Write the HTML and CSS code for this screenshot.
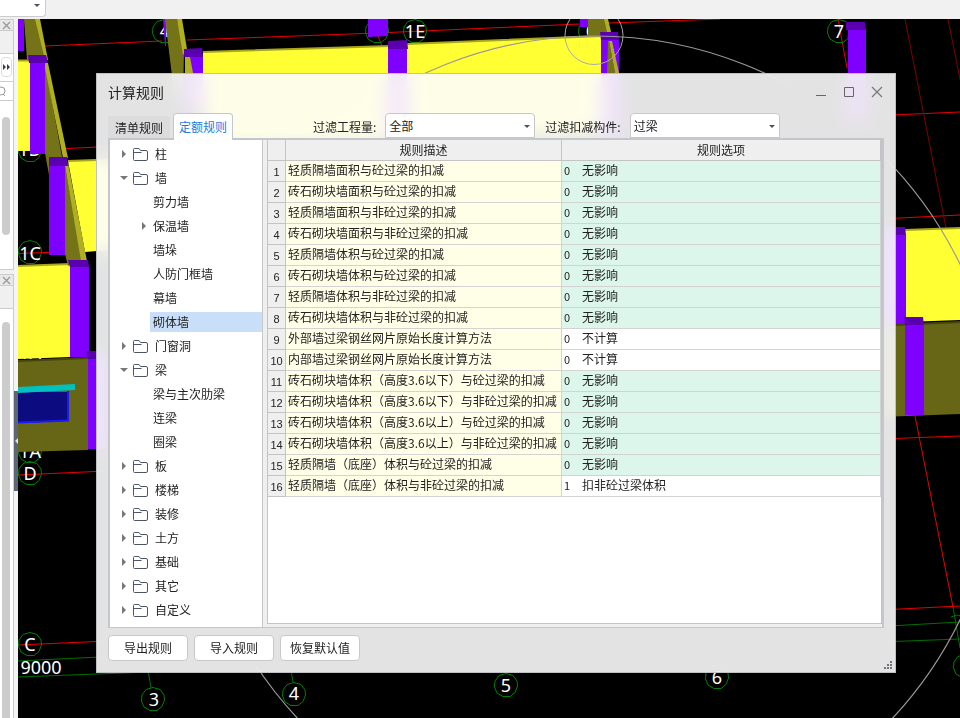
FILE: index.html
```html
<!DOCTYPE html>
<html lang="zh-CN">
<head>
<meta charset="utf-8">
<title>计算规则</title>
<link rel="stylesheet" href="styles.css">
</head>
<body>
<svg class="defs" aria-hidden="true">
  <symbol id="folder" viewBox="0 0 15 13"><path d="M1.500 12.500q-1 0-1-1V1.500q0-1 1-1h4.500l1.500 2h5.500q1.500 0 1.500 1.500v7q0 1.500-1.500 1.500zM.5 4.500h8" fill="none" stroke="#4d5566"/></symbol>
  <symbol id="closed" viewBox="0 0 6 8"><path d="M1 0v8l4-4z" fill="#777"/></symbol>
  <symbol id="open" viewBox="0 0 8 6"><path d="M0 1h8l-4 4z" fill="#777"/></symbol>
  <symbol id="oct" viewBox="-13 -13 26 26"><path d="M0-11.500 7-9.500 11-4 11.500 1 9 7.500 4 11.500-3 11.500-9 8-11.500 2-11-4-7-9.500z" fill="none" stroke="#008000"/></symbol>
  <symbol id="cross" viewBox="0 0 9 9"><path d="M1 1l7 7M8 1l-7 7" fill="none" stroke="#999" stroke-width="1.300"/></symbol>
</svg>
<header class="topbar"><div class="topbar-combo"></div></header>
<main class="workspace">
  <aside class="docks">
    <section class="dock dock-upper">
      <div class="dock-head"><svg width="9" height="9"><use href="#cross"/></svg></div>
      <div class="dock-strip"></div>
      <div class="dock-more"><svg width="8" height="6" viewBox="0 0 8 6"><path d="M0 0v6l3-3zM4 0v6l3-3z" fill="#333b4a"/></svg></div>
      <div class="dock-search"><svg width="10" height="12" viewBox="0 0 10 12"><circle cx="1" cy="5" r="4" fill="none" stroke="#999"/><path d="M3 8l2 2" stroke="#999"/></svg></div>
      <div class="dock-scroll"></div>
    </section>
    <section class="dock dock-lower">
      <div class="dock-head"><svg width="9" height="9"><use href="#cross"/></svg></div>
      <div class="dock-strip"></div>
      <div class="dock-scroll"></div>
    </section>
  </aside>
  <div class="splitter"><div class="splitter-grip"><svg width="4" height="6" viewBox="0 0 4 6"><path d="M4 0v6l-3-3z" fill="#e0e0e0"/></svg></div></div>
  <div class="canvas">
    <svg viewBox="18 19 942 699" preserveAspectRatio="xMinYMin slice" role="img" aria-label="三维模型视图">
      <rect x="18" y="19" width="942" height="699" fill="#000"/>
      <path d="M44 46 162 41M187 40 377 33 580 24 720 19M66 148.500 120 146M18 253.500 60 252M18 475 150 469M18 645 130 640M880 115.500 960 112M880 219 960 215M880 439 960 436M880 610 960 606M915 416 953 607M838 19 847 68M378 36 382 46" fill="none" stroke="#e60000"/>
      <path d="M905 19 946 228M948 19 961 84" stroke="#800000" fill="none"/>
      <path d="M18 661 120 656M18 677 150 672M880 626.500 960 622M880 642 960 639M953 607 960 648M148 670 151 688M291 670 293 682M951 617l6-2 4 1" stroke="#007000" fill="none"/>
      <g>
        <use href="#oct" x="151" y="18" width="26" height="26"/><use href="#oct" x="364" y="18" width="26" height="26"/>
        <use href="#oct" x="402" y="18" width="26" height="26"/><use href="#oct" x="577" y="18" width="26" height="26"/>
        <use href="#oct" x="826" y="18" width="26" height="26"/><use href="#oct" x="17" y="137" width="26" height="26"/>
        <use href="#oct" x="17" y="239" width="26" height="26"/><use href="#oct" x="17" y="438" width="26" height="26"/>
        <use href="#oct" x="17" y="460" width="26" height="26"/><use href="#oct" x="17" y="631" width="26" height="26"/>
        <use href="#oct" x="140" y="686" width="26" height="26"/><use href="#oct" x="281" y="681" width="26" height="26"/>
        <use href="#oct" x="493" y="672" width="26" height="26"/><use href="#oct" x="704" y="664" width="26" height="26"/>
        <use href="#oct" x="952" y="653" width="26" height="26"/>
      </g>
      <g class="axis-label">
        <text x="165" y="37">4</text><text x="415" y="38">1E</text><text x="591" y="37">6</text><text x="839" y="38">7</text>
        <text x="30" y="156">1D</text><text x="30" y="260">1C</text><text x="30" y="359">1A</text><text x="30" y="458">1A</text><text x="30" y="480">D</text>
        <text x="30" y="651">C</text><text x="41" y="674">9000</text><text x="154" y="706">3</text><text x="294" y="700">4</text>
        <text x="506" y="692">5</text><text x="717" y="684">6</text>
      </g>
      <path d="M18 19h6v32h-6zM368 19h20v17l-20 1zM580 19h9v8h-9zM163 19h3v27h-1z" fill="#8000ff"/>
      <g fill="#ff3">
        <path d="M18 60h12v91H18zM68 161l80-4v92l-51 2-12 1zM18 266l52-2v93l-52 2zM203 52l187-6v97l-187 6zM407 44l195-8v97l-195 9zM905 230l55-2v92l-55 2z"/>
      </g>
      <path d="M18 60.500h12M68 161l29-1M18 266l52-2M203 52l187-6M407 44l195-8M905 230l55-2" fill="none" stroke="#a8a61c" stroke-width="2"/>
      <path d="M18 361l70-3v92l-70 2zM880 326l80-4v92l-80 3z" fill="#666616"/>
      <path d="M18 361l70-3M896 325l64-3" stroke="#45450d" stroke-width="2"/>
      <path d="M24 19h12l9 37-18 4zM45 63l17 94-13 18-4-22zM65 166l17 94-14 6-3-12zM165 19h12l7 31-1 50h-8zM588 19h17l4 17h-21z" fill="#757317"/>
      <path d="M35 19h5l8 41-3 0zM44 63h4l20 95h-5zM65 166l3-3 19 98h-6zM177 19h5l5 30-4 6zM604 19h4l4 17h-4z" fill="#b0ae22"/>
      <path d="M30 62h15v92H30zM49 165h16v90H49zM70 266h19v91H70zM88 358h20v91H88zM185 56h18v56h-18zM388 47h19v100h-19zM601 39h18v100h-18zM848 29h18v90h-18zM880 234h26v90h-26zM905 324h19v91h-19z" fill="#8000ff"/>
      <path d="M28 55h18l2 8H29zM49 157h18l1 9H49zM68 260h20l1 7H70zM86 351h20v8H88zM184 49l18-1 1 9h-19zM388 41l19-1 1 9h-20zM600 32h18l1 8h-18zM846 22h19l1 8h-20zM880 227h25l1 8h-26zM904 317h19l1 8h-19z" fill="#5a00b0"/>
      <path d="M185 57h5l3 16h-8zM609 41h3l7 32h-4z" fill="#b0ae22"/>
      <path d="M608 41h1l6 32h-8z" fill="#757317"/>
      <path d="M18 392h51v29l-51 2z" fill="#0c0c80"/>
      <path d="M18 422.500l50-2V391" fill="none" stroke="#1a1aff" stroke-width="2"/>
      <path d="M18 387l57-3v6l-57 3z" fill="#00c0c0"/>
      <circle cx="594" cy="35.500" r="29" fill="none" stroke="#aaa"/>
      <circle cx="595" cy="442" r="406" fill="none" stroke="#999" stroke-width="1.200"/>
    </svg>
  </div>
</main>

<section class="dialog" role="dialog" aria-labelledby="dialog-title">
  <header class="titlebar">
    <h1 id="dialog-title">计算规则</h1>
    <div class="window-buttons">
      <button type="button" aria-label="最小化"><svg width="12" height="12"><path d="M1 9.500h10" stroke="#666"/></svg></button>
      <button type="button" aria-label="最大化"><svg width="12" height="12"><path d="M1.500 1.500h9v9h-9z" fill="none" stroke="#666"/></svg></button>
      <button type="button" aria-label="关闭"><svg width="12" height="12"><path d="M1 1l10 10M11 1 1 11" stroke="#777" stroke-width="1.200"/></svg></button>
    </div>
  </header>
  <div class="toolbar">
    <div class="tabs" role="tablist">
      <button type="button" class="tab" role="tab" aria-selected="false">清单规则</button>
      <button type="button" class="tab tab-active" role="tab" aria-selected="true">定额规则</button>
    </div>
    <label for="quantity">过滤工程量:</label>
    <div class="combo"><select id="quantity"><option>全部</option></select></div>
    <label for="member">过滤扣减构件:</label>
    <div class="combo"><select id="member"><option>过梁</option></select></div>
  </div>
  <div class="panel">
    <ul class="tree" role="tree">
      <li role="treeitem"><svg class="arrow"><use href="#closed"/></svg><svg class="folder"><use href="#folder"/></svg><span>柱</span></li>
      <li role="treeitem"><svg class="arrow arrow-open"><use href="#open"/></svg><svg class="folder"><use href="#folder"/></svg><span>墙</span></li>
      <li class="child" role="treeitem"><span>剪力墙</span></li>
      <li class="child" role="treeitem"><svg class="arrow"><use href="#closed"/></svg><span>保温墙</span></li>
      <li class="child" role="treeitem"><span>墙垛</span></li>
      <li class="child" role="treeitem"><span>人防门框墙</span></li>
      <li class="child" role="treeitem"><span>幕墙</span></li>
      <li class="child selected" role="treeitem" aria-selected="true"><span>砌体墙</span></li>
      <li role="treeitem"><svg class="arrow"><use href="#closed"/></svg><svg class="folder"><use href="#folder"/></svg><span>门窗洞</span></li>
      <li role="treeitem"><svg class="arrow arrow-open"><use href="#open"/></svg><svg class="folder"><use href="#folder"/></svg><span>梁</span></li>
      <li class="child" role="treeitem"><span>梁与主次肋梁</span></li>
      <li class="child" role="treeitem"><span>连梁</span></li>
      <li class="child" role="treeitem"><span>圈梁</span></li>
      <li role="treeitem"><svg class="arrow"><use href="#closed"/></svg><svg class="folder"><use href="#folder"/></svg><span>板</span></li>
      <li role="treeitem"><svg class="arrow"><use href="#closed"/></svg><svg class="folder"><use href="#folder"/></svg><span>楼梯</span></li>
      <li role="treeitem"><svg class="arrow"><use href="#closed"/></svg><svg class="folder"><use href="#folder"/></svg><span>装修</span></li>
      <li role="treeitem"><svg class="arrow"><use href="#closed"/></svg><svg class="folder"><use href="#folder"/></svg><span>土方</span></li>
      <li role="treeitem"><svg class="arrow"><use href="#closed"/></svg><svg class="folder"><use href="#folder"/></svg><span>基础</span></li>
      <li role="treeitem"><svg class="arrow"><use href="#closed"/></svg><svg class="folder"><use href="#folder"/></svg><span>其它</span></li>
      <li role="treeitem"><svg class="arrow"><use href="#closed"/></svg><svg class="folder"><use href="#folder"/></svg><span>自定义</span></li>
    </ul>
    <div class="grid">
      <table>
        <colgroup><col class="col-no"><col class="col-rule"><col></colgroup>
        <thead><tr><th></th><th>规则描述</th><th>规则选项</th></tr></thead>
        <tbody>
          <tr><th>1</th><td>轻质隔墙面积与砼过梁的扣减</td><td><span class="code">0</span>无影响</td></tr>
          <tr><th>2</th><td>砖石砌块墙面积与砼过梁的扣减</td><td><span class="code">0</span>无影响</td></tr>
          <tr><th>3</th><td>轻质隔墙面积与非砼过梁的扣减</td><td><span class="code">0</span>无影响</td></tr>
          <tr><th>4</th><td>砖石砌块墙面积与非砼过梁的扣减</td><td><span class="code">0</span>无影响</td></tr>
          <tr><th>5</th><td>轻质隔墙体积与砼过梁的扣减</td><td><span class="code">0</span>无影响</td></tr>
          <tr><th>6</th><td>砖石砌块墙体积与砼过梁的扣减</td><td><span class="code">0</span>无影响</td></tr>
          <tr><th>7</th><td>轻质隔墙体积与非砼过梁的扣减</td><td><span class="code">0</span>无影响</td></tr>
          <tr><th>8</th><td>砖石砌块墙体积与非砼过梁的扣减</td><td><span class="code">0</span>无影响</td></tr>
          <tr class="plain"><th>9</th><td>外部墙过梁钢丝网片原始长度计算方法</td><td><span class="code">0</span>不计算</td></tr>
          <tr class="plain"><th>10</th><td>内部墙过梁钢丝网片原始长度计算方法</td><td><span class="code">0</span>不计算</td></tr>
          <tr><th>11</th><td>砖石砌块墙体积（高度3.6以下）与砼过梁的扣减</td><td><span class="code">0</span>无影响</td></tr>
          <tr><th>12</th><td>砖石砌块墙体积（高度3.6以下）与非砼过梁的扣减</td><td><span class="code">0</span>无影响</td></tr>
          <tr><th>13</th><td>砖石砌块墙体积（高度3.6以上）与砼过梁的扣减</td><td><span class="code">0</span>无影响</td></tr>
          <tr><th>14</th><td>砖石砌块墙体积（高度3.6以上）与非砼过梁的扣减</td><td><span class="code">0</span>无影响</td></tr>
          <tr><th>15</th><td>轻质隔墙（底座）体积与砼过梁的扣减</td><td><span class="code">0</span>无影响</td></tr>
          <tr class="plain"><th>16</th><td>轻质隔墙（底座）体积与非砼过梁的扣减</td><td><span class="code">1</span>扣非砼过梁体积</td></tr>
        </tbody>
      </table>
    </div>
  </div>
  <footer class="actions">
    <button type="button">导出规则</button>
    <button type="button">导入规则</button>
    <button type="button">恢复默认值</button>
    <svg class="size-grip" width="8" height="8"><path d="M6 0h2v2H6zM3 3h2v2H3zM6 3h2v2H6zM0 6h2v2H0zM3 6h2v2H3zM6 6h2v2H6z" fill="#70757d"/></svg>
  </footer>
</section>
</body>
</html>
```
FILE: styles.css
```css
*, ::after { box-sizing: border-box; }
body {
  margin: 0;
  height: 100vh;
  overflow: hidden;
  display: flex;
  flex-direction: column;
  background: #f1f1f1;
  color: #222;
  font: 12px/20px "Noto Sans CJK SC", sans-serif;
}
svg { display: block; flex: none; }
button, select { font: inherit; color: inherit; }
.defs { position: absolute; width: 0; height: 0; }

.topbar { height: 19px; flex: none; }
.topbar-combo {
  width: 46px;
  height: 17px;
  border: solid #ccc;
  border-width: 0 1px 1px 0;
  border-radius: 0 0 4px 0;
  background: #fff;
  padding: 4px 0 0 34px;
}
.topbar-combo::after, .combo::after {
  content: "";
  display: block;
  width: 6px;
  border: solid transparent;
  border-width: 3px 3px 0;
  border-top-color: #4a5160;
}

.workspace { flex: 1; min-height: 0; display: flex; }
.docks { width: 14px; display: flex; flex-direction: column; background: #f1f1f1; }
.dock { display: flex; flex-direction: column; border: solid #ccc; border-width: 1px 1px 1px 0; background: #fff; }
.dock-upper { height: 251px; }
.dock-lower { flex: 1; margin-top: 4px; border-bottom: 0; }
.dock-head { height: 11px; background: #e8e8e8; padding: 1px 2px; border-bottom: 1px solid #ccc; }
.dock-strip { height: 23px; background: #f0f0f0; border-bottom: 1px solid #ccc; }
.dock-more {
  height: 20px;
  margin: 3px 1px 4px;
  border: 1px solid #ddd;
  border-radius: 4px;
  padding: 6px 0 0 1px;
}
.dock-search { height: 20px; border: solid #ccc; border-width: 1px 0; padding-top: 4px; }
.dock-scroll { flex: 1; width: 8px; margin: 16px 0 34px 2px; border-radius: 4px; background: #ccc; }
.dock-lower .dock-scroll { margin: 13px 0 0 2px; border-radius: 4px 4px 0 0; }
.splitter { width: 4px; background: #f4f4f4; display: flex; align-items: center; }
.splitter-grip { width: 4px; height: 100px; margin-top: 145px; background: #5d6675; display: flex; align-items: center; }
.canvas { flex: 1; min-width: 0; background: #000; overflow: hidden; }
.canvas svg { width: 100%; height: 100%; }
.axis-label { fill: #fff; font: 18px "Noto Sans", sans-serif; text-anchor: middle; }

.dialog {
  position: absolute;
  inset: 73px 64px 45px 96px;
  display: flex;
  flex-direction: column;
  border: 1px solid #bfc2c5;
  background: rgba(254, 254, 254, .895);
  backdrop-filter: blur(10px);
  padding: 0 11px;
}
.titlebar { height: 39px; flex: none; display: flex; justify-content: space-between; }
h1 { margin: 0; font-size: 14px; line-height: 37px; font-weight: 400; }
.window-buttons { display: flex; gap: 16px; padding: 12px 1px 0 0; }
.window-buttons button { width: 12px; height: 12px; padding: 0; border: 0; background: none; }
.toolbar { height: 25px; flex: none; display: flex; align-items: stretch; }
.tabs { display: flex; gap: 3px; margin-right: 80px; }
.tab {
  height: 22px;
  width: 62px;
  margin-top: 3px;
  padding: 1px 0 0;
  border: 0;
  border-radius: 3px 3px 0 0;
  background: #dcdcdc;
  line-height: 18px;
}
.tab-active {
  width: 60px;
  height: 27px;
  margin-top: 0;
  padding: 0;
  border: 1px solid #c3c7cd;
  border-bottom: 0;
  border-radius: 4px 4px 0 0;
  background: #fff;
  color: #1f7ae0;
  position: relative;
}
.toolbar label { line-height: 27px; margin-right: 9px; }
.combo { position: relative; width: 150px; margin-right: 10px; }
.combo::after { position: absolute; right: 5px; top: 12px; }
.combo select {
  appearance: none;
  width: 100%;
  height: 100%;
  border: 1px solid #c8c8c8;
  border-radius: 4px 4px 0 0;
  background: #fff;
  padding: 1px 3px 0;
}
.panel {
  flex: 1;
  min-height: 0;
  display: flex;
  gap: 4px;
  padding: 0 0 3px;
  border: solid #c3c7cb;
  border-width: 2px 2px 1px 2px;
  background: #efefef;
}
.tree {
  list-style: none;
  margin: 0 0 -3px;
  padding: 2px 0 0;
  width: 153px;
  border-right: 1px solid #c8c8c8;
  background: #fff;
}
.tree li { height: 24px; display: flex; align-items: center; padding-left: 10px; }
.tree span { padding-left: 7px; line-height: 20px; }
.arrow { width: 6px; height: 8px; margin: 0 6px 0 1px; }
.arrow-open { width: 8px; height: 6px; margin: 0 5px 0 0; }
.folder { width: 15px; height: 13px; }
.tree .child { padding-left: 40px; }
.tree .child span { flex: 1; padding-left: 3px; line-height: 20px; }
.tree .child .arrow { margin: 0 3px 0 -9px; }
.tree .selected span { background: #c9dff9; }
.grid { flex: 1; border: solid #c4c4c4; border-width: 0 1px 1px; background: #fff; overflow: hidden; }
table { width: 100%; border-collapse: separate; border-spacing: 0; table-layout: fixed; }
.col-no { width: 18px; }
.col-rule { width: 276px; }
th, td { height: 21px; padding: 0 0 2px 2px; border: solid #d3d3d3; border-width: 0 1px 1px 0; line-height: 18px; text-align: left; white-space: nowrap; }
th { font-weight: 400; text-align: center; background: #efefef; border-color: #c4c4c4; padding: 0; line-height: 20px; }
tbody th { font-family: "Liberation Sans", sans-serif; font-size: 11px; padding-top: 2px; line-height: 18px; }
td:nth-child(2) { background: #fffee6; }
td:nth-child(3) { background: #dcf6eb; }
.plain td:nth-child(3) { background: #fff; }
.code { display: inline-block; width: 18px; font-size: 11px; }
.actions { height: 44px; flex: none; display: flex; gap: 6px; align-items: flex-start; padding-top: 7px; position: relative; }
.actions button {
  width: 80px;
  height: 26px;
  padding: 0;
  border: 1px solid #c8c8c8;
  border-radius: 4px;
  background: #fff;
}
.size-grip { position: absolute; right: -8px; bottom: 3px; }
```
